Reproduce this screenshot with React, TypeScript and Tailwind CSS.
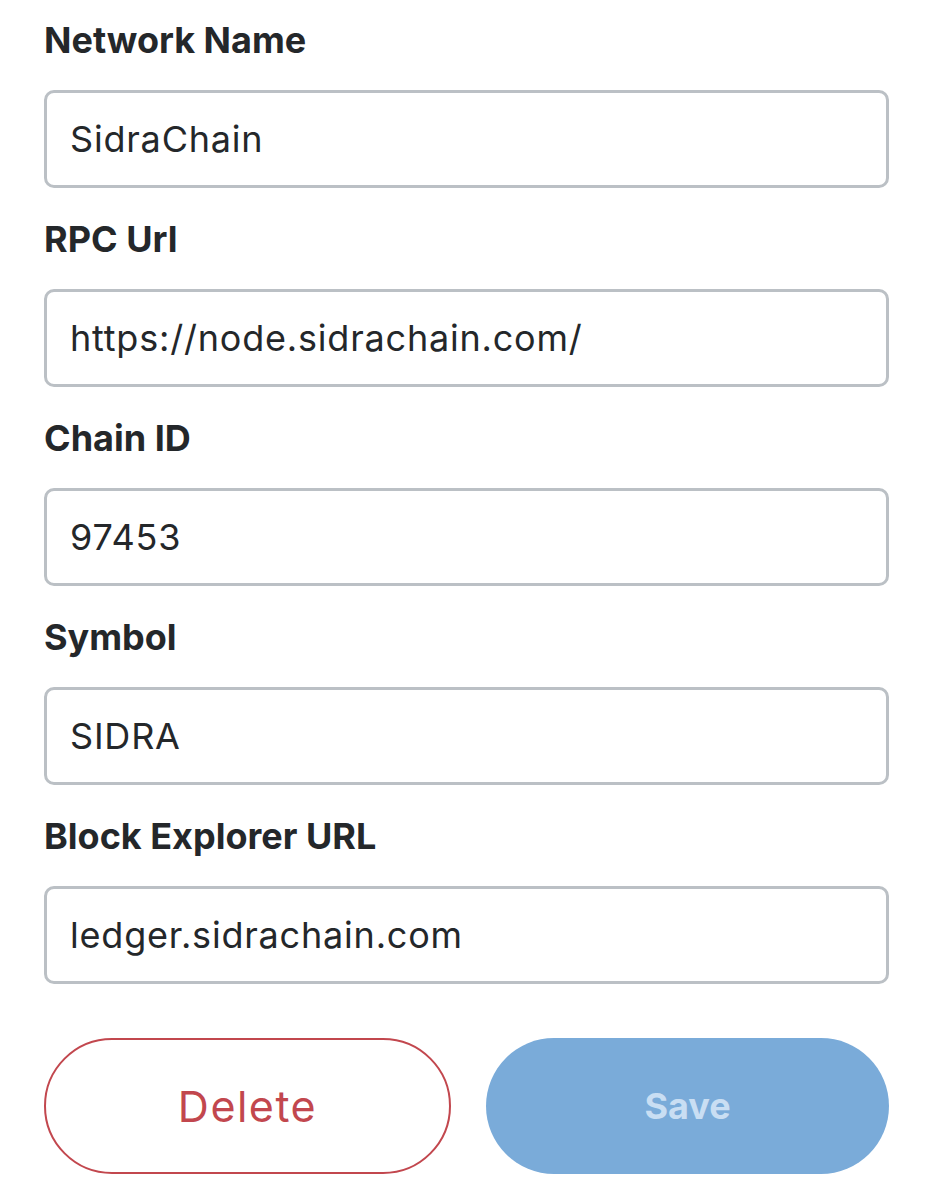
import React from "react"

interface FieldProps {
  label: string
  value: string
}

const Field: React.FC<FieldProps> = ({ label, value }) => (
  <div className="flex flex-col">
    <label className="h-[40px] leading-[40px] text-[36px] font-bold text-[#24272a]">
      {label}
    </label>
    <div className="mt-[30px] h-[98px] rounded-[10px] border-[3px] border-[#bbc0c5] flex items-center pl-[23px]">
      <span className="text-[36px] text-[#24272a] tracking-[0.8px]">{value}</span>
    </div>
  </div>
)

const fields: FieldProps[] = [
  { label: "Network Name", value: "SidraChain" },
  { label: "RPC Url", value: "https://node.sidrachain.com/" },
  { label: "Chain ID", value: "97453" },
  { label: "Symbol", value: "SIDRA" },
  { label: "Block Explorer URL", value: "ledger.sidrachain.com" },
]

export default function App() {
  return (
    <div
      className="w-[933px] h-[1200px] bg-white pl-[44px] pr-[44px] pt-[20px]"
      style={{ fontFamily: "Inter, 'Noto Sans', sans-serif" }}
    >
      <div className="flex flex-col gap-[31px]">
        {fields.map((f) => (
          <Field key={f.label} label={f.label} value={f.value} />
        ))}
      </div>
      <div className="flex gap-[35px] mt-[54px]">
        <button className="flex-1 h-[136px] rounded-full border-2 border-[#c2474e] text-[#c2474e] text-[43px] font-normal tracking-[1.5px]">
          Delete
        </button>
        <button className="flex-1 h-[136px] rounded-full bg-[#7aabd9] text-[#c9def3] text-[36px] font-bold">
          Save
        </button>
      </div>
    </div>
  )
}
